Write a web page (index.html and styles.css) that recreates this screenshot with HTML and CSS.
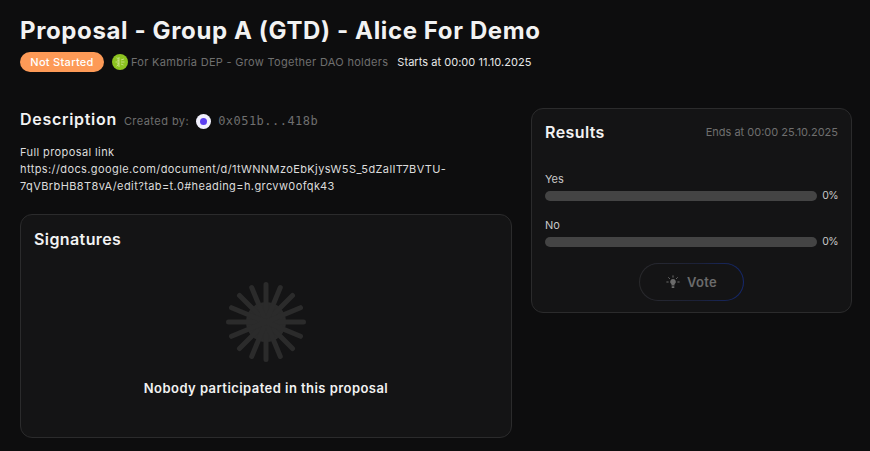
FILE: index.html
```html
<!DOCTYPE html>
<html lang="en">
<head>
    <meta charset="UTF-8" />
    <title>Proposal - Group A (GTD) - Alice For Demo</title>
    <link rel="stylesheet" href="styles.css">
</head>
<body>
    <header class="top">
        <h1>Proposal - Group A (GTD) - Alice For Demo</h1>
        <div class="meta">
            <span class="badge">Not Started</span>
            <span class="dao">
                <svg class="dao-logo" viewBox="0 0 16 16" width="16" height="16">
                    <circle cx="8" cy="8" r="8" fill="#8cc320"/>
                    <g stroke="#cfe596" stroke-width="0.8" fill="none">
                        <path d="M7 3v10M7 5L4.500 3.800M7 8H3.500M7 10.500L4.500 12.200M7 6.500L5 6M7 9.500L5 10"/>
                        <path d="M9 6l3-1M9 8h3.500M9 10l2.500 1"/>
                    </g>
                </svg>
                For Kambria DEP - Grow Together DAO holders
            </span>
            <span class="starts">Starts at 00:00 11.10.2025</span>
        </div>
    </header>

    <main class="columns">
        <section class="left">
            <div class="desc-head">
                <h2>Description</h2>
                <span class="created">Created by:</span>
                <span class="avatar"><span class="avatar-dot"></span></span>
                <span class="address">0x051b...418b</span>
            </div>
            <p class="desc-text">Full proposal link<br>https://docs.google.com/document/d/1tWNNMzoEbKjysW5S_5dZalIT7BVTU-<br>7qVBrbHB8T8vA/edit?tab=t.0#heading=h.grcvw0ofqk43</p>

            <div class="card signatures">
                <h3>Signatures</h3>
                <div class="empty">
                    <svg class="burst" viewBox="0 0 80 80" width="80" height="80">
                        <circle cx="40" cy="40" r="20" fill="#2b2b2b"/>
                        <g stroke="#2b2b2b" stroke-width="5" stroke-linecap="round">
                            <path d="M40 2.500V77.500M2.500 40H77.500"/>
                            <path d="M13.500 13.500L66.500 66.500M66.500 13.500L13.500 66.500"/>
                            <path d="M25.700 5.500L54.300 74.500M54.300 5.500L25.700 74.500"/>
                            <path d="M5.500 25.700L74.500 54.300M74.500 25.700L5.500 54.300"/>
                        </g>
                    </svg>
                    <p>Nobody participated in this proposal</p>
                </div>
            </div>
        </section>

        <aside class="card results">
            <div class="results-head">
                <h3>Results</h3>
                <span class="ends">Ends at 00:00 25.10.2025</span>
            </div>
            <div class="option">
                <div class="option-name">Yes</div>
                <div class="option-row">
                    <div class="bar"></div>
                    <span class="pct">0%</span>
                </div>
            </div>
            <div class="option">
                <div class="option-name">No</div>
                <div class="option-row">
                    <div class="bar"></div>
                    <span class="pct">0%</span>
                </div>
            </div>
            <button class="vote">
                <svg viewBox="0 0 14 14" width="14" height="14">
                    <path d="M7 4a2.800 2.800 0 0 0-1.500 5.200V10.500h3V9.200A2.800 2.800 0 0 0 7 4zM5.700 11.300h2.600V13H5.700z" fill="#6b6b6b"/>
                    <path d="M7 .8v1.400M2.600 2.600l1 1M11.400 2.600l-1 1M.8 7h1.400M11.800 7h1.400" stroke="#6b6b6b" stroke-width="1" stroke-linecap="round"/>
                </svg>
                Vote
            </button>
        </aside>
    </main>
</body>
</html>
```

FILE: styles.css
```css
body {
    margin: 0;
    padding: 17px 18px 0 20px;
    background-color: #0d0d0e;
    color: #f2f2f2;
    font-family: 'Inter', 'Open Sans', sans-serif;
    overflow: hidden;
}

h1 {
    margin: 0;
    font-size: 24px;
    line-height: 28px;
    font-weight: 700;
    letter-spacing: 0.62px;
}

.meta {
    display: flex;
    align-items: center;
    margin-top: 7px;
    font-size: 11px;
}

.badge {
    width: 84px;
    height: 20px;
    line-height: 20px;
    text-align: center;
    border-radius: 10px;
    background-color: #fd9a57;
    color: white;
    font-weight: 500;
    letter-spacing: 0.3px;
}

.dao {
    display: flex;
    align-items: center;
    gap: 3px;
    margin-left: 8px;
    color: #6f6f6f;
    letter-spacing: 0.3px;
}

.starts {
    margin-left: 9px;
    color: #e8e8e8;
    letter-spacing: 0.04px;
}

.columns {
    display: grid;
    grid-template-columns: 492px 321px;
    column-gap: 19px;
    align-items: start;
    margin-top: 36px;
}

.desc-head {
    display: flex;
    align-items: center;
    height: 22px;
}

h2 {
    margin: 0;
    font-size: 16px;
    font-weight: 600;
    letter-spacing: 0.7px;
}

.created {
    margin: 4px 0 0 7px;
    font-size: 11px;
    color: #6f6f6f;
    letter-spacing: 0.45px;
}

.avatar {
    display: flex;
    align-items: center;
    justify-content: center;
    width: 15px;
    height: 15px;
    margin: 4px 0 0 7px;
    border-radius: 50%;
    background-color: #f0effc;
}

.avatar-dot {
    width: 7px;
    height: 7px;
    border-radius: 50%;
    background-color: #5a3df0;
}

.address {
    margin: 4px 0 0 7px;
    font-family: 'DejaVu Sans Mono', monospace;
    font-size: 12px;
    letter-spacing: 0.47px;
    color: #6f6f6f;
}

.desc-text {
    margin: 14px 0 0;
    font-size: 11px;
    line-height: 17px;
    color: #dcdcdc;
    letter-spacing: 0.4px;
}

.card {
    box-sizing: border-box;
    background-color: #141415;
    border: 1px solid #2b2b2c;
    border-radius: 12px;
}

h3 {
    margin: 0;
    font-size: 16px;
    line-height: 20px;
    font-weight: 600;
    letter-spacing: 0.4px;
}

.signatures {
    height: 224px;
    margin-top: 19px;
    padding: 14px 13px;
}

.empty {
    display: flex;
    flex-direction: column;
    align-items: center;
    margin-top: 33px;
}

.empty p {
    margin: 18px 0 0;
    font-size: 13px;
    font-weight: 600;
    letter-spacing: 0.45px;
}

.results {
    height: 205px;
    padding: 13px 13px;
}

.results-head {
    display: flex;
    align-items: center;
    justify-content: space-between;
}

.ends {
    font-size: 11px;
    color: #6f6f6f;
}

.option {
    margin-top: 15px;
}

.results-head + .option {
    margin-top: 30px;
}

.option-name {
    font-size: 11px;
    line-height: 14px;
    color: #c8c8c8;
}

.option-row {
    display: flex;
    align-items: center;
    justify-content: space-between;
    height: 14px;
    margin-top: 3px;
}

.bar {
    width: 272px;
    height: 10px;
    border-radius: 5px;
    background-color: #444444;
}

.pct {
    font-size: 10.500px;
    line-height: 14px;
    color: #c8c8c8;
    letter-spacing: -0.6px;
}

.vote {
    display: flex;
    align-items: center;
    justify-content: center;
    gap: 7px;
    width: 105px;
    height: 38px;
    margin: 14px auto 0;
    border: 1px solid transparent;
    border-radius: 19px;
    background: linear-gradient(#141415, #141415) padding-box,
        linear-gradient(90deg, #2a2a2c 0%, #1c2138 55%, #14286e 100%) border-box;
    color: #6b6b6b;
    font-family: inherit;
    font-size: 13px;
    font-weight: 600;
    letter-spacing: 0.3px;
}
```
